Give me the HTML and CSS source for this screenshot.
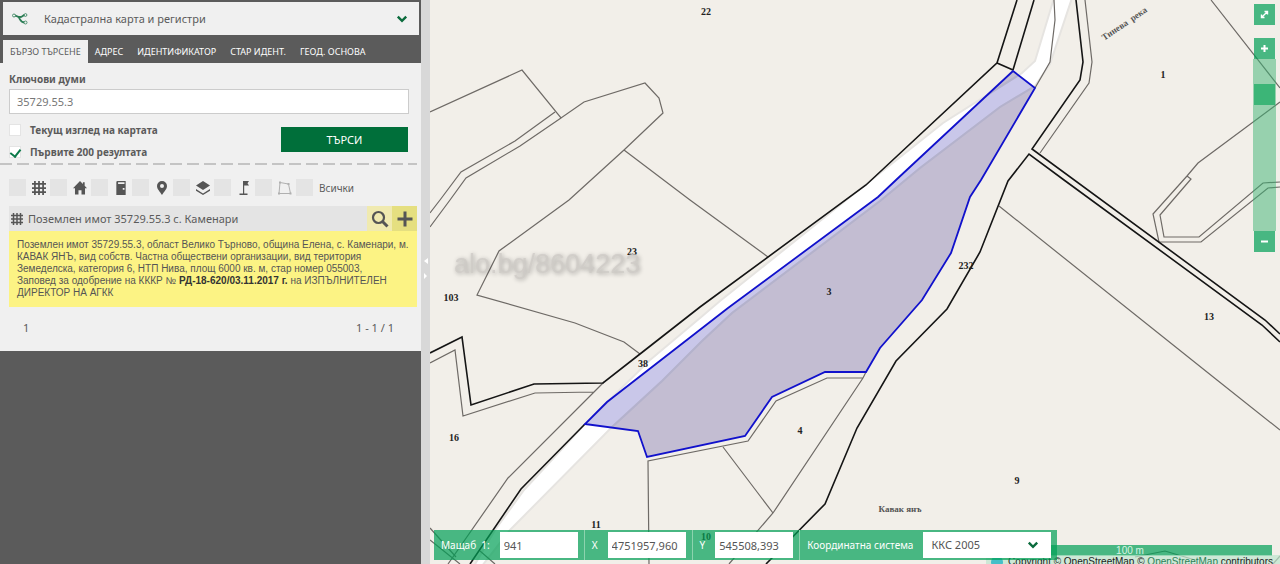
FILE: index.html
```html
<!DOCTYPE html>
<html lang="bg">
<head>
<meta charset="utf-8">
<title>Кадастрална карта и регистри</title>
<link rel="stylesheet" href="styles.css">
</head>
<body>
<svg class="sprite" aria-hidden="true">
  <symbol id="i-grid" viewBox="0 0 12 12"><path d="M2.500 0v12M6 0v12M9.500 0v12M0 2.500h12M0 6h12M0 9.500h12" fill="none" stroke="currentColor" stroke-width="1.500"/></symbol>
  <symbol id="i-chevron" viewBox="0 0 10 8"><path d="M1.500 2 5 5.500 8.500 2" fill="none" stroke="currentColor" stroke-width="2"/></symbol>
</svg>
<div class="app">
  <aside class="sidebar">
    <button class="service" type="button">
      <svg class="service-logo" viewBox="0 0 16 12" aria-hidden="true"><path d="M2 2.500C5 2.500 5 4 8 4S10 2 13.500 2M5.500 3.500C9 5 7 9.500 13 9.500" fill="none" stroke="#2c7d55" stroke-width="1.800"/><g fill="#f0f0f0" stroke="#2c7d55" stroke-width=".8"><circle cx="2" cy="2.500" r="1.500"/><circle cx="13.500" cy="2" r="1.400"/><circle cx="13.500" cy="9.500" r="1.500"/></g></svg>
      <span>Кадастрална карта и регистри</span>
      <svg class="chevron" aria-hidden="true"><use href="#i-chevron"/></svg>
    </button>
    <nav class="tabs">
      <a class="tab active" href="#quick">БЪРЗО ТЪРСЕНЕ</a>
      <a class="tab" href="#address">АДРЕС</a>
      <a class="tab" href="#id">ИДЕНТИФИКАТОР</a>
      <a class="tab" href="#old">СТАР ИДЕНТ.</a>
      <a class="tab" href="#geo">ГЕОД. ОСНОВА</a>
    </nav>
    <main class="panel">
      <form class="search">
        <label class="caption" for="keywords">Ключови думи</label>
        <input class="keywords" id="keywords" type="text" value="35729.55.3">
        <div class="options">
          <div class="checks">
            <label class="check"><input type="checkbox"><span>Текущ изглед на картата</span></label>
            <label class="check"><input type="checkbox" checked><span>Първите 200 резултата</span></label>
          </div>
          <button class="submit" type="button">ТЪРСИ</button>
        </div>
      </form>
      <div class="dashes"></div>
      <div class="filters">
        <label class="filter"><input type="checkbox" aria-label="Поземлен имот"><svg viewBox="0 0 12 12"><use href="#i-grid"/></svg></label>
        <label class="filter"><input type="checkbox" aria-label="Сграда"><svg viewBox="0 0 12 12"><path fill="currentColor" d="M6 0 0 6.200h1.700V11.500h3V8h2.600v3.500h3V6.200H12L10 4.100V1H8.500v1.500z"/></svg></label>
        <label class="filter"><input type="checkbox" aria-label="Обект в сграда"><svg viewBox="0 0 12 12"><path fill="currentColor" fill-rule="evenodd" d="M2 1q0-1 1-1h7v12H2zM3.500 1v1.500H9V1zM7.500 6v1.500H9V6z"/></svg></label>
        <label class="filter"><input type="checkbox" aria-label="Точка"><svg viewBox="0 0 12 14"><path fill="currentColor" fill-rule="evenodd" d="M6 0a5 5 0 0 1 5 5c0 3.300-3.300 6-5 9C4.300 11 1 8.300 1 5a5 5 0 0 1 5-5zm0 3a2 2 0 1 0 0 4 2 2 0 0 0 0-4z"/></svg></label>
        <label class="filter"><input type="checkbox" aria-label="Слой"><svg viewBox="0 0 14 14"><path fill="currentColor" d="M7 0 0 4.500 7 9l7-4.500zM0 8l7 4.500L14 8v1.700L7 14 0 9.700z"/></svg></label>
        <label class="filter"><input type="checkbox" aria-label="Геодезическа точка"><svg viewBox="0 0 12 14"><path fill="currentColor" d="M5 0H11L9.500 2.300 11 4.500H6.200V12.500H9.500V14H1.500v-1.500H5z"/></svg></label>
        <label class="filter"><input type="checkbox" aria-label="Граница"><svg viewBox="0 0 14 14"><path d="M2 1.500 10.500 3 12.500 12.500H1z" fill="none" stroke="#b0b0b0"/><path fill="#b0b0b0" d="M1 .5h2v2H1zM9.500 2h2v2h-2zM11.500 11.500h2v2h-2zM0 11.500h2v2H0z"/></svg></label>
        <label class="filter"><input type="checkbox"><span>Всички</span></label>
      </div>
      <article class="result">
        <header class="result-head">
          <svg class="result-icon" viewBox="0 0 12 12" aria-hidden="true"><use href="#i-grid"/></svg>
          <h2>Поземлен имот 35729.55.3 с. Каменари</h2>
          <button class="act zoomto" type="button" aria-label="Покажи"><svg viewBox="0 0 18 18"><circle cx="7.500" cy="7.500" r="5.500" fill="none" stroke="currentColor" stroke-width="2.200"/><path d="m11.500 11.500 5 5" stroke="currentColor" stroke-width="3"/></svg></button>
          <button class="act add" type="button" aria-label="Добави"><svg viewBox="0 0 18 18"><path d="M9 1.500v15M1.500 9h15" stroke="currentColor" stroke-width="3"/></svg></button>
        </header>
        <p class="details">Поземлен имот 35729.55.3, област Велико Търново, община Елена, с. Каменари, м. КАВАК ЯНЪ, вид собств. Частна обществени организации, вид територия Земеделска, категория 6, НТП Нива, площ 6000 кв. м, стар номер 055003,<br>Заповед за одобрение на КККР № <b>РД-18-620/03.11.2017 г.</b> на ИЗПЪЛНИТЕЛЕН ДИРЕКТОР НА АГКК</p>
      </article>
      <footer class="pager"><a href="#page1">1</a><span>1 - 1 / 1</span></footer>
    </main>
  </aside>
  <div class="divider"><svg viewBox="0 0 4 22" aria-hidden="true"><path fill="#fff" d="M4 0v6L0 3zM0 15v6l3-3z"/></svg></div>
  <section class="map">
    <svg class="canvas" viewBox="430 0 850 564" preserveAspectRatio="xMinYMin slice" role="img" aria-label="Карта">
      <defs>
        <path id="river" d="M1054-2 1035 61 1022 73 943 123 870 181 720 301 700 318 650 360 585 424 524 490 495 530 474 566H482L510 530 612 427 662 381 702 341 732 313 880 201 920 168 1000 107 1035 86 1050 64 1072-2z"/>
        <path id="plot" d="M1013 71 1035 88 981 180 970 197 951 253 922 300 880 348 866 372H825L772 397 745 436 647 457 638 431 585 424 607 402 728 308 878 197 896 180z"/>
        <clipPath id="plot-clip"><use href="#plot"/></clipPath>
      </defs>
      <use class="road" href="#river"/>
      <use class="parcel" href="#plot"/>
      <g clip-path="url(#plot-clip)"><use class="road-tint" href="#river"/></g>
      <g class="thin">
        <path d="M430 112 522 70 561 118 584 102 645 83 659 98 663 113 624 150 569 200 499 251 477 295 575 323 624 342 640 354"/>
        <path d="M555 112 515 141 461 172 440 200 430 213M561 118 520 146 466 178 450 200 430 227M624 150 690 200 768 257"/>
        <path d="M430 363 455 350 463 416 535 393 594 392M604 382 508 478 448 564M430 528 456 557M430 540 460 564M480 551 495 564"/>
        <path d="M866 372 863 378H827L776 401 748 441 648 461 649 564M723 447 773 513M863 378 773 513 729 564"/>
        <path d="M1054 0 1055 20 1050 62 1035 88M1085 0 1092 62 1089 83 1040 153"/>
        <path d="M999 206 1217 380 1280 430M1211 0 1280 88"/>
        <path d="M1280 102 1198 163 1187 176 1153 214 1159 242H1201L1268 188 1280 187M1187 176 1191 179 1160 215 1164 237H1199L1263 183 1280 182"/>
        <path d="M1135 557 1165 551 1195 560M1273 564 1280 556"/>
      </g>
      <g class="thick">
        <path d="M430 353 462 337 471 405 534 384 603 383 640 354 700 307 866 185 997 63 1013 70M1017 0 997 63M1034 0 1013 70"/>
        <path d="M585 424 521 489 470 564M1076 0 1083 62 1080 80 1032 149 1265 320 1280 334"/>
        <path d="M766 564 825 504 857 428 896 361 947 309 980 252 1008 181 1029 154 1064 180 1262 325 1280 342"/>
      </g>
      <use class="outline" href="#plot"/>
      <g class="numbers">
        <text x="706" y="15">22</text><text x="1163" y="78">1</text><text x="632" y="255">23</text><text x="829" y="295">3</text><text x="966" y="269">232</text><text x="451" y="301">103</text><text x="643" y="367">38</text><text x="454" y="441">16</text><text x="800" y="434">4</text><text x="596" y="528">11</text><text x="706" y="540">10</text><text x="1017" y="484">9</text><text x="1209" y="320">13</text>
      </g>
      <text class="place" x="900" y="512">Кавак янъ</text>
      <text class="place" transform="translate(1126 26) rotate(-34)">Тинева&#160; река</text>
      <text class="watermark" x="454" y="273">alo.bg/8604223</text>
    </svg>
    <div class="zoom">
      <button class="zbtn full" type="button" aria-label="Цял екран"><svg viewBox="0 0 9 9"><path d="M1.500 7.500 7.500 1.500M4.500 1.500h3v3M1.500 4.500v3h3" fill="none" stroke="#fff" stroke-width="1.400"/></svg></button>
      <button class="zbtn" type="button" aria-label="Увеличи"><svg viewBox="0 0 9 9"><path d="M4.500 1v7M1 4.500h7" stroke="#fff" stroke-width="2"/></svg></button>
      <div class="track"><div class="thumb"></div></div>
      <button class="zbtn" type="button" aria-label="Намали"><svg viewBox="0 0 9 9"><path d="M1 4.500h7" stroke="#fff" stroke-width="2"/></svg></button>
    </div>
    <div class="scale">100 m</div>
    <div class="credits"><i class="dot"></i>Copyright © OpenStreetMap © <a href="#osm">OpenStreetMap</a> contributors</div>
    <form class="status">
      <div class="cell"><label for="scale">Мащаб&nbsp; 1:</label><input id="scale" type="text" value="941"></div>
      <div class="cell"><label for="x">X</label><input id="x" type="text" value="4751957,960"></div>
      <div class="cell"><label for="y">Y</label><input id="y" type="text" value="545508,393"></div>
      <div class="cell"><label for="crs">Координатна система</label><div class="picker"><select id="crs"><option>ККС 2005</option></select><svg class="chevron" aria-hidden="true"><use href="#i-chevron"/></svg></div></div>
    </form>
  </section>
</div>
</body>
</html>
```

FILE: styles.css
```css
* { box-sizing: border-box; }
body {
  margin: 0;
  font: 11px/16px "Noto Sans", "Open Sans", sans-serif;
  color: #5b5b5b;
}
button, input, select { font: inherit; color: inherit; margin: 0; border: 0; border-radius: 0; padding: 0; }
button { cursor: pointer; }
a { color: inherit; text-decoration: none; }
.sprite { display: none; }

.app {
  display: grid;
  grid-template-columns: minmax(320px, 421px) 9px minmax(0, 1fr);
  min-height: 100vh;
}

/* Search sidebar */
.sidebar { background: #5b5b5b; }
.service {
  display: flex;
  align-items: center;
  gap: 16px;
  width: calc(100% - 5px);
  height: 33px;
  margin: 2px 2px 5px 3px;
  padding: 0 11px 0 9px;
  background: #f0f0f0;
  text-align: left;
}
.service span { flex: 1; }
.service-logo { width: 16px; height: 12px; }
.chevron { width: 12px; height: 10px; color: #0b6b3d; }

.tabs { display: flex; padding-left: 3px; }
.tab { padding: 4px 7px; font-size: 9px; line-height: 15px; color: #fff; white-space: nowrap; }
.tab.active { background: #f0f0f0; color: #5b5b5b; }

.panel { background: #f0f0f0; padding: 8px 4px 12px 9px; }
.search { padding-right: 8px; }
.caption { display: block; font-weight: bold; font-size: 10px; line-height: 16px; margin-bottom: 2px; }
.keywords {
  width: 100%;
  height: 25px;
  padding: 0 7px;
  border: 1px solid #ccc;
  background: #fff;
  color: #777;
}
.options { display: flex; justify-content: space-between; padding: 8px 1px 3px 0; }
.checks { display: grid; gap: 6px; }
.check { display: flex; align-items: center; gap: 9px; font-weight: bold; font-size: 10px; }
.check input {
  appearance: none;
  width: 12px;
  height: 12px;
  border: 1px solid #e4e4e4;
  background: #fff;
}
.check input:checked::after {
  content: "";
  display: block;
  width: 5px;
  height: 8px;
  margin: 0 0 0 2px;
  border: solid #0c7a4a;
  border-width: 0 2px 2px 0;
  transform: rotate(38deg);
}
.submit { width: 127px; height: 25px; margin-top: 5px; background: #006f3a; color: #fff; }
.dashes {
  height: 2px;
  margin: 0 0 14px -9px;
  background: repeating-linear-gradient(90deg, #c4c4c4 0 12px, transparent 12px 17px);
}
.filters { display: flex; align-items: center; }
.filter { display: flex; align-items: center; gap: 6px; flex: 0 0 41px; }
.filter input { appearance: none; width: 17px; height: 17px; background: #e4e4e4; }
.filter svg { width: 14px; height: 14px; color: #555; }
.filter span { font-size: 10px; }

.result { margin-top: 10px; }
.result-head { display: flex; align-items: center; height: 25px; background: #e4e4e4; }
.result-icon { width: 12px; height: 12px; margin: 0 5px 0 2px; color: #555; }
.result h2 { flex: 1; margin: 0; font: inherit; }
.act { display: grid; place-items: center; width: 25px; height: 25px; color: #555; }
.act svg { width: 18px; height: 18px; }
.zoomto { background: #f0eab0; }
.add { background: #e5df80; }
.details {
  margin: 0;
  padding: 8px 6px 8px 8px;
  background: #fcf384;
  color: #555;
  font: 10px/12px "Liberation Sans", Arial, sans-serif;
}
.details b { color: #333; }
.pager { display: flex; justify-content: space-between; padding: 13px 23px 3px 14px; }

.divider { display: grid; place-items: center; padding-bottom: 26px; background: #d8d8d8; }
.divider svg { width: 4px; height: 22px; }

/* Map */
.map { position: relative; overflow: hidden; background: #f2efe9; }
.canvas { position: absolute; inset: 0; width: 100%; height: 100%; }
.road { fill: #fff; stroke: #e6e4e1; stroke-width: 2; }
.road-tint { fill: #c8c8f4; fill-opacity: .5; stroke: #b4b2cc; stroke-width: 2; }
.parcel { fill: #7c74af; fill-opacity: .4; }
.thin, .thick, .outline { fill: none; }
.thin { stroke: #6e6a66; stroke-width: 1.2; }
.thick { stroke: #151515; stroke-width: 1.6; }
.outline { stroke: #1111cc; stroke-width: 1.8; }
.numbers { font: bold 10px "Liberation Serif", serif; fill: #222; text-anchor: middle; }
.place { font: bold 9px "Liberation Serif", serif; fill: #555; text-anchor: middle; }
.watermark {
  font: 27px "Liberation Sans", Arial, sans-serif;
  fill: rgba(205, 202, 198, .75);
  filter: drop-shadow(1px 1px 2px rgba(0, 0, 0, .4));
}

.zoom { position: absolute; top: 4px; right: 4px; display: grid; justify-items: center; width: 23px; }
.zbtn { display: grid; place-items: center; width: 21px; height: 21px; background: rgba(0, 160, 85, .7); }
.zbtn svg { width: 9px; height: 9px; }
.zbtn.full { margin-bottom: 13px; }
.track { width: 23px; height: 172px; padding-top: 25px; background: rgba(60, 180, 115, .5); }
.thumb { height: 21px; margin: 0 1px; background: #3cb577; }

.scale {
  position: absolute;
  right: 8px;
  bottom: 8px;
  width: 284px;
  height: 11px;
  background: rgba(0, 160, 85, .7);
  color: #d8f5e4;
  font: 10px/11px "Liberation Sans", Arial, sans-serif;
  text-align: center;
}
.credits {
  position: absolute;
  right: 0;
  bottom: -5px;
  display: flex;
  align-items: center;
  height: 14px;
  padding: 0 7px 0 5px;
  background: rgba(190, 230, 205, .7);
  color: #222;
  font: 10px/14px "Liberation Sans", Arial, sans-serif;
  white-space: pre;
}
.credits a { color: #2d8058; }
.dot { width: 12px; height: 12px; margin-right: 5px; border-radius: 50%; background: #45bfc8; }

.status {
  position: absolute;
  left: 4px;
  bottom: 4px;
  display: flex;
  height: 30px;
  background: rgba(0, 160, 85, .7);
  color: #fff;
}
.cell { display: flex; align-items: center; gap: 10px; padding: 0 6px 0 7px; border-left: 1px solid #8dd3ae; white-space: nowrap; }
.cell:first-child { border-left: 0; }
.cell label { font-size: 10px; }
.cell input, .cell select { width: 78px; height: 26px; padding: 0 4px; background: #fff; color: #555; }
.picker { display: flex; align-items: center; }
.cell select { appearance: none; width: 128px; padding: 0 8px; }
.picker .chevron { margin-left: -24px; margin-right: 12px; pointer-events: none; }
```
